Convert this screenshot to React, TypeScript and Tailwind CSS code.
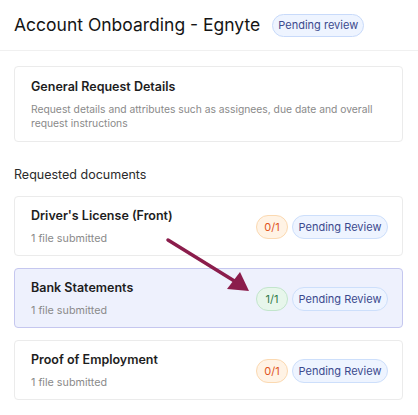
const font = { fontFamily: 'Inter, "Noto Sans", sans-serif' };

type Doc = {
    name: string;
    count: string;
    done: boolean;
    active?: boolean;
};

const docs: Doc[] = [
    { name: "Driver's License (Front)", count: '0/1', done: false },
    { name: 'Bank Statements', count: '1/1', done: true, active: true },
    { name: 'Proof of Employment', count: '0/1', done: false },
];

function DocCard({ doc }: { doc: Doc }) {
    return (
        <div
            className={`flex items-center justify-between rounded border pl-4 pr-[14px] h-[60px] ${
                doc.active ? 'bg-[#eef1fd] border-[#c5c7ef]' : 'bg-white border-[#ebebeb]'
            }`}
        >
            <div className="flex flex-col gap-[5px]">
                <div className="text-[12.5px] leading-5 font-semibold text-[#1d1d1d]">{doc.name}</div>
                <div className="text-[10.75px] leading-4 text-[#8a8a8a]">1 file submitted</div>
            </div>
            <div className="flex items-center gap-1 mt-[2px]">
                <span
                    className={`h-[24px] w-[32px] flex items-center justify-center rounded-full border text-[11px] ${
                        doc.done
                            ? 'bg-[#e7f6eb] border-[#c2e5cc] text-[#2f7a48]'
                            : 'bg-[#fff3e5] border-[#fbd9b1] text-[#e0531c]'
                    }`}
                >
                    {doc.count}
                </span>
                <span className="h-[24px] w-[96px] whitespace-nowrap flex items-center justify-center rounded-full border bg-[#eef4ff] border-[#cddffb] text-[11px] text-[#3b4a8e]">
                    Pending Review
                </span>
            </div>
        </div>
    );
}

export default function App() {
    return (
        <div className="relative w-[418px] h-[415px] bg-white overflow-hidden" style={font}>
            <div className="flex items-center gap-3 h-[51px] px-[14px] border-b border-[#f0f0f0]">
                <h1 className="text-[17.5px] leading-6 text-[#151515] font-normal">Account Onboarding - Egnyte</h1>
                <span className="h-[23px] w-[92px] whitespace-nowrap flex items-center justify-center rounded-full border bg-[#eef4ff] border-[#c8dafa] text-[11px] text-[#3b4a8e]">
                    Pending review
                </span>
            </div>

            <div className="px-[14px] pr-[15px]">
                <div className="mt-[15px] rounded border border-[#ebebeb] px-4 pt-[10px] pb-[11px]">
                    <div className="text-[12.5px] leading-5 font-semibold text-[#1d1d1d]">General Request Details</div>
                    <div className="mt-[5px] text-[10.3px] leading-[14px] text-[#8a8a8a]">
                        Request details and attributes such as assignees, due date and overall request instructions
                    </div>
                </div>

                <div className="mt-[23px] text-[12.5px] leading-5 text-[#2b2b2b]">Requested documents</div>

                <div className="mt-[11px] flex flex-col gap-3">
                    {docs.map((d) => (
                        <DocCard key={d.name} doc={d} />
                    ))}
                </div>
            </div>

            <svg className="absolute left-0 top-0 pointer-events-none" width="418" height="415">
                <line x1="168" y1="240" x2="236" y2="282" stroke="#8b1d4c" strokeWidth="3.5" strokeLinecap="round" />
                <polygon points="249,291 227,289 240,272" fill="#8b1d4c" />
            </svg>
        </div>
    );
}
